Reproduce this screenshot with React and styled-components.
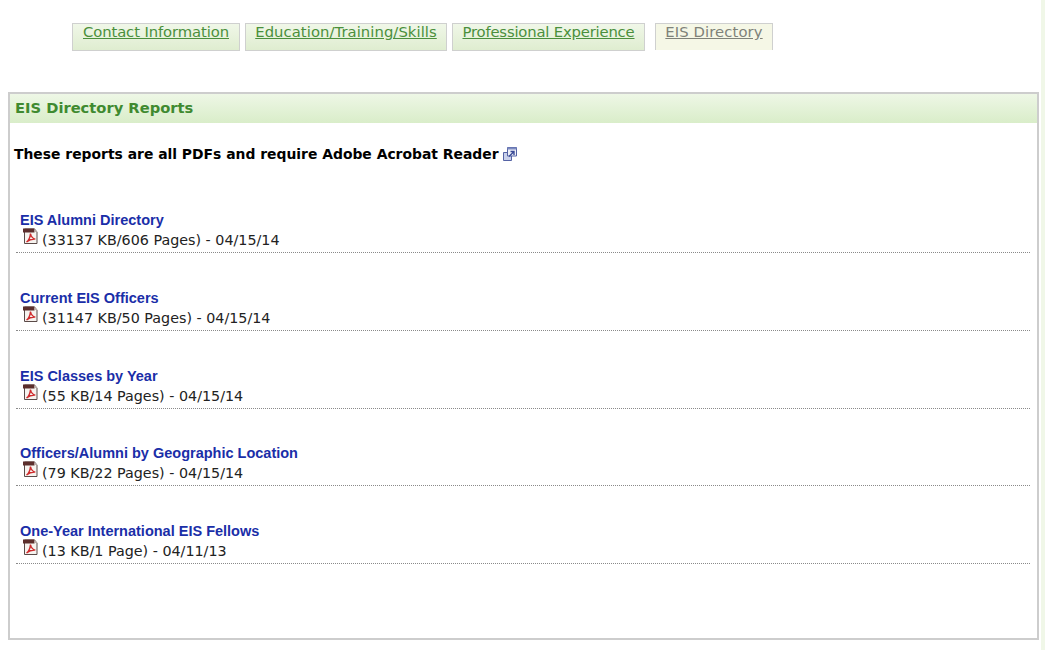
import React from "react";
import styled, { createGlobalStyle } from "styled-components";

const GlobalStyle = createGlobalStyle`
  html, body {
    margin: 0;
    padding: 0;
    background: #fff;
    overflow: hidden;
  }
`;

const tabs = [
  { label: "Contact Information", width: 168, gap: 0, spacing: -0.1 },
  { label: "Education/Training/Skills", width: 202, gap: 5, spacing: 0.06 },
  { label: "Professional Experience", width: 193, gap: 5, spacing: -0.18 },
  { label: "EIS Directory", width: 118, gap: 10, spacing: 0.1, active: true },
];

const reports = [
  { title: "EIS Alumni Directory", meta: "(33137 KB/606 Pages) - 04/15/14" },
  { title: "Current EIS Officers", meta: "(31147 KB/50 Pages) - 04/15/14" },
  { title: "EIS Classes by Year", meta: "(55 KB/14 Pages) - 04/15/14" },
  { title: "Officers/Alumni by Geographic Location", meta: "(79 KB/22 Pages) - 04/15/14" },
  { title: "One-Year International EIS Fellows", meta: "(13 KB/1 Page) - 04/11/13" },
];

const PdfIcon = () => (
  <svg width="17" height="16" viewBox="0 0 17 16">
    <path d="M2.500 1h10l2.500 3v11.500H2.500z" fill="#f6f3ef" stroke="#5a4a48" />
    <path d="M1 .5h11.500v4H1z" fill="#5c2e2c" />
    <path d="M12.500 .5l3 3.500h-3z" fill="#b9aca8" />
    <path
      d="M4.500 14c2.200-1.500 3.600-4.500 4-8.500.5 3 2.300 5 4.800 5.600-3-.2-6 .5-8.800 2.900z"
      fill="none"
      stroke="#cf2a2c"
      strokeWidth="1.400"
    />
  </svg>
);

const ExternalIcon = () => (
  <svg width="14" height="14" viewBox="0 0 14 14">
    <path d="M.5 5.500h8v8h-8z" fill="#c9d0ea" stroke="#5563a5" />
    <path d="M4.500 .5h9v8.500h-9z" fill="#eef0f8" stroke="#5563a5" />
    <path d="M4.500 .5h9v2h-9z" fill="#7c8ac0" />
    <path d="M6 9.500l4.500-4.500M7.500 4.500h3.500v3.500" fill="none" stroke="#3a4a96" strokeWidth="1.400" />
  </svg>
);

const App = () => {
  return (
    <Page>
      <GlobalStyle />
      <Main>
        <TabBar>
          {tabs.map((tab) => (
            <Tab key={tab.label} $width={tab.width} $gap={tab.gap} $active={tab.active}>
              <TabLink href="#" $spacing={tab.spacing} $active={tab.active}>
                {tab.label}
              </TabLink>
            </Tab>
          ))}
        </TabBar>
        <Panel>
          <PanelTitle>EIS Directory Reports</PanelTitle>
          <Notice>
            These reports are all PDFs and require Adobe Acrobat Reader
            <ExternalIcon />
          </Notice>
          <ReportList>
            {reports.map((report) => (
              <Report key={report.title}>
                <ReportLink href="#">{report.title}</ReportLink>
                <ReportMeta>
                  <PdfIcon />
                  <span>{report.meta}</span>
                </ReportMeta>
              </Report>
            ))}
          </ReportList>
        </Panel>
      </Main>
      <SideStrip />
    </Page>
  );
};

const Page = styled.div`
  display: flex;
  width: 1045px;
  height: 650px;
  font-family: "DejaVu Sans", sans-serif;
`;

const Main = styled.div`
  flex: 1;
  padding: 23px 2px 0 8px;
`;

const SideStrip = styled.div`
  width: 4px;
  background: #f0f7e8;
`;

const TabBar = styled.div`
  display: flex;
  height: 28px;
  padding-left: 64px;
  margin-bottom: 41px;
`;

const Tab = styled.div`
  box-sizing: border-box;
  width: ${({ $width }) => $width}px;
  margin-left: ${({ $gap }) => $gap}px;
  height: ${({ $active }) => ($active ? "27px" : "28px")};
  border: 1px solid #cfd0cf;
  border-bottom: ${({ $active }) => ($active ? "none" : "1px solid #cfd0cf")};
  background: ${({ $active }) =>
    $active ? "#f5f7e6" : "linear-gradient(#f0f7e8, #dfedd0)"};
  text-align: center;
  line-height: 15px;
`;

const TabLink = styled.a`
  font-size: 14.800px;
  letter-spacing: ${({ $spacing }) => $spacing}px;
  color: ${({ $active }) => ($active ? "#7f8279" : "#4a8f3c")};
`;

const Panel = styled.section`
  box-sizing: border-box;
  height: 548px;
  border: 2px solid #cdcdcd;
`;

const PanelTitle = styled.h2`
  margin: 0;
  height: 29px;
  padding-left: 5px;
  background: linear-gradient(#eef7e6, #d9edc9);
  font-size: 14.700px;
  line-height: 28px;
  font-weight: bold;
  color: #3f8a30;
`;

const Notice = styled.p`
  display: flex;
  align-items: center;
  gap: 4px;
  margin: 0;
  padding: 21px 0 0 4px;
  height: 20px;
  font-size: 13.900px;
  line-height: 20px;
  font-weight: bold;
  color: #000;
`;

const ReportList = styled.div`
  display: flex;
  flex-direction: column;
  gap: 35.800px;
  margin: 47px 7px 0 6px;
`;

const Report = styled.div`
  height: 41px;
  border-bottom: 1px dotted #8a8a8a;
  padding-left: 4px;
`;

const ReportLink = styled.a`
  display: block;
  font-family: "Liberation Sans", sans-serif;
  font-size: 14.500px;
  line-height: 18px;
  font-weight: bold;
  color: #1a2ea8;
  text-decoration: none;
`;

const ReportMeta = styled.div`
  display: flex;
  align-items: flex-start;
  gap: 3px;
  font-size: 14.300px;
  line-height: 18px;
  color: #222;
  svg {
    flex: none;
    margin: -1px 0 0 2px;
  }
  span {
    margin-top: 2px;
  }
`;

export default App;
